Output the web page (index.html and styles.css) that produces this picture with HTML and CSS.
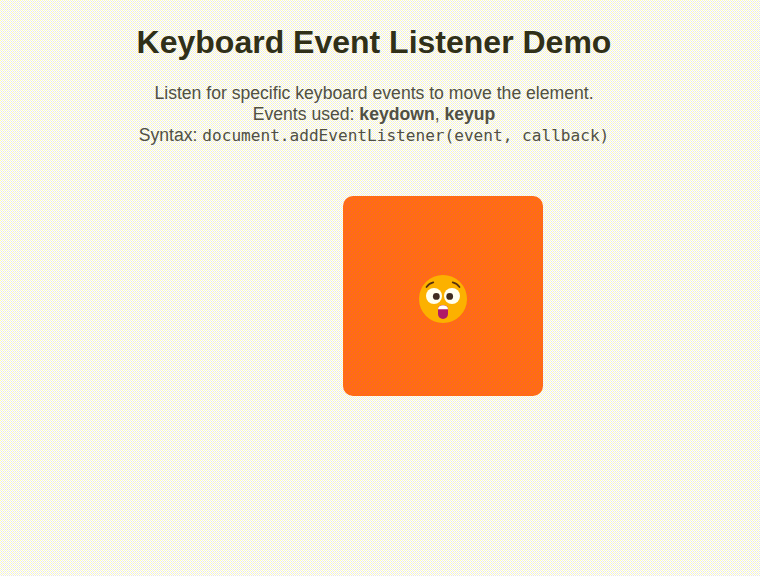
FILE: index.html
```html
<!DOCTYPE html>
<html lang="en">
<head>
<meta charset="utf-8">
<title>Keyboard Event Listener Demo</title>
<link rel="stylesheet" href="styles.css">
</head>
<body>
<main class="demo">
  <h1 class="title">Keyboard Event Listener Demo</h1>
  <p class="intro">Listen for specific keyboard events to move the element.<br>
  Events used: <strong>keydown</strong>, <strong>keyup</strong><br>
  Syntax: <code>document.addEventListener(event, callback)</code></p>
  <div class="box">
    <svg class="face" viewBox="0 0 50 50" aria-label="Surprised face">
      <circle cx="25" cy="25" r="24" fill="#fcb100"/>
      <circle cx="16" cy="22" r="8" fill="#fffff0"/>
      <circle cx="34" cy="22" r="8" fill="#fffff0"/>
      <circle cx="18.3" cy="22.4" r="3.4" fill="#402c20"/>
      <circle cx="31.7" cy="22.4" r="3.4" fill="#402c20"/>
      <path d="M8.5 13Q11 9.3 15.3 8.3M41.5 13Q39 9.3 34.7 8.3" fill="none" stroke="#583010" stroke-width="1.7" stroke-linecap="round"/>
      <path d="M20 35.5a5 4.5 0 0 1 10 0v4.5a5 5 0 0 1-10 0z" fill="#b01868"/>
      <path d="M20 35.2a5 4 0 0 1 10 0z" fill="#fff"/>
    </svg>
  </div>
</main>
</body>
</html>
```
FILE: styles.css
```css
html {
  min-height: 100%;
  background: #fffffa url("data:image/svg+xml,%3Csvg xmlns='http://www.w3.org/2000/svg' width='4' height='4' shape-rendering='crispEdges'%3E%3Cpath d='M0 0h1v1H0zM2 2h1v1H2z' fill='%23ffffb0'/%3E%3Cpath d='M2 0h1v1H2zM0 2h1v1H0z' fill='%23f2f2e4'/%3E%3Cpath d='M1 1h1v1H1zM3 1h1v1H3zM1 3h1v1H1zM3 3h1v1H3z' fill='%23e6e6ea'/%3E%3C/svg%3E") 0 0 / 4px 4px;
}
body {
  margin: 0 12px 0 0;
  font-family: "Liberation Sans", Arial, sans-serif;
  color: #505044;
}
.demo {
  display: flex;
  flex-direction: column;
  align-items: center;
  padding-top: 24px;
}
.title {
  margin: 0;
  font-size: 32px;
  line-height: 36px;
  color: #303018;
  white-space: nowrap;
}
.intro {
  margin: 23px 0 0;
  font-size: 17.6px;
  line-height: 21px;
  text-align: center;
  white-space: nowrap;
}
.intro code {
  font-family: "DejaVu Sans Mono", monospace;
  font-size: 16.1px;
  line-height: 1;
}
.box {
  display: flex;
  align-items: center;
  justify-content: center;
  width: 200px;
  height: 200px;
  margin: 50px 0 0 138px;
  border-radius: 10px;
  background: #ff6b17 url("data:image/svg+xml,%3Csvg xmlns='http://www.w3.org/2000/svg' width='4' height='4' shape-rendering='crispEdges'%3E%3Cpath d='M0 0h1v1H0zM2 2h1v1H2z' fill='%23ff7800'/%3E%3Cpath d='M1 1h1v1H1zM3 3h1v1H3z' fill='%23ff6030'/%3E%3C/svg%3E") 0 0 / 4px 4px;
}
.face {
  width: 50px;
  height: 50px;
  margin-top: 6px;
}
```
